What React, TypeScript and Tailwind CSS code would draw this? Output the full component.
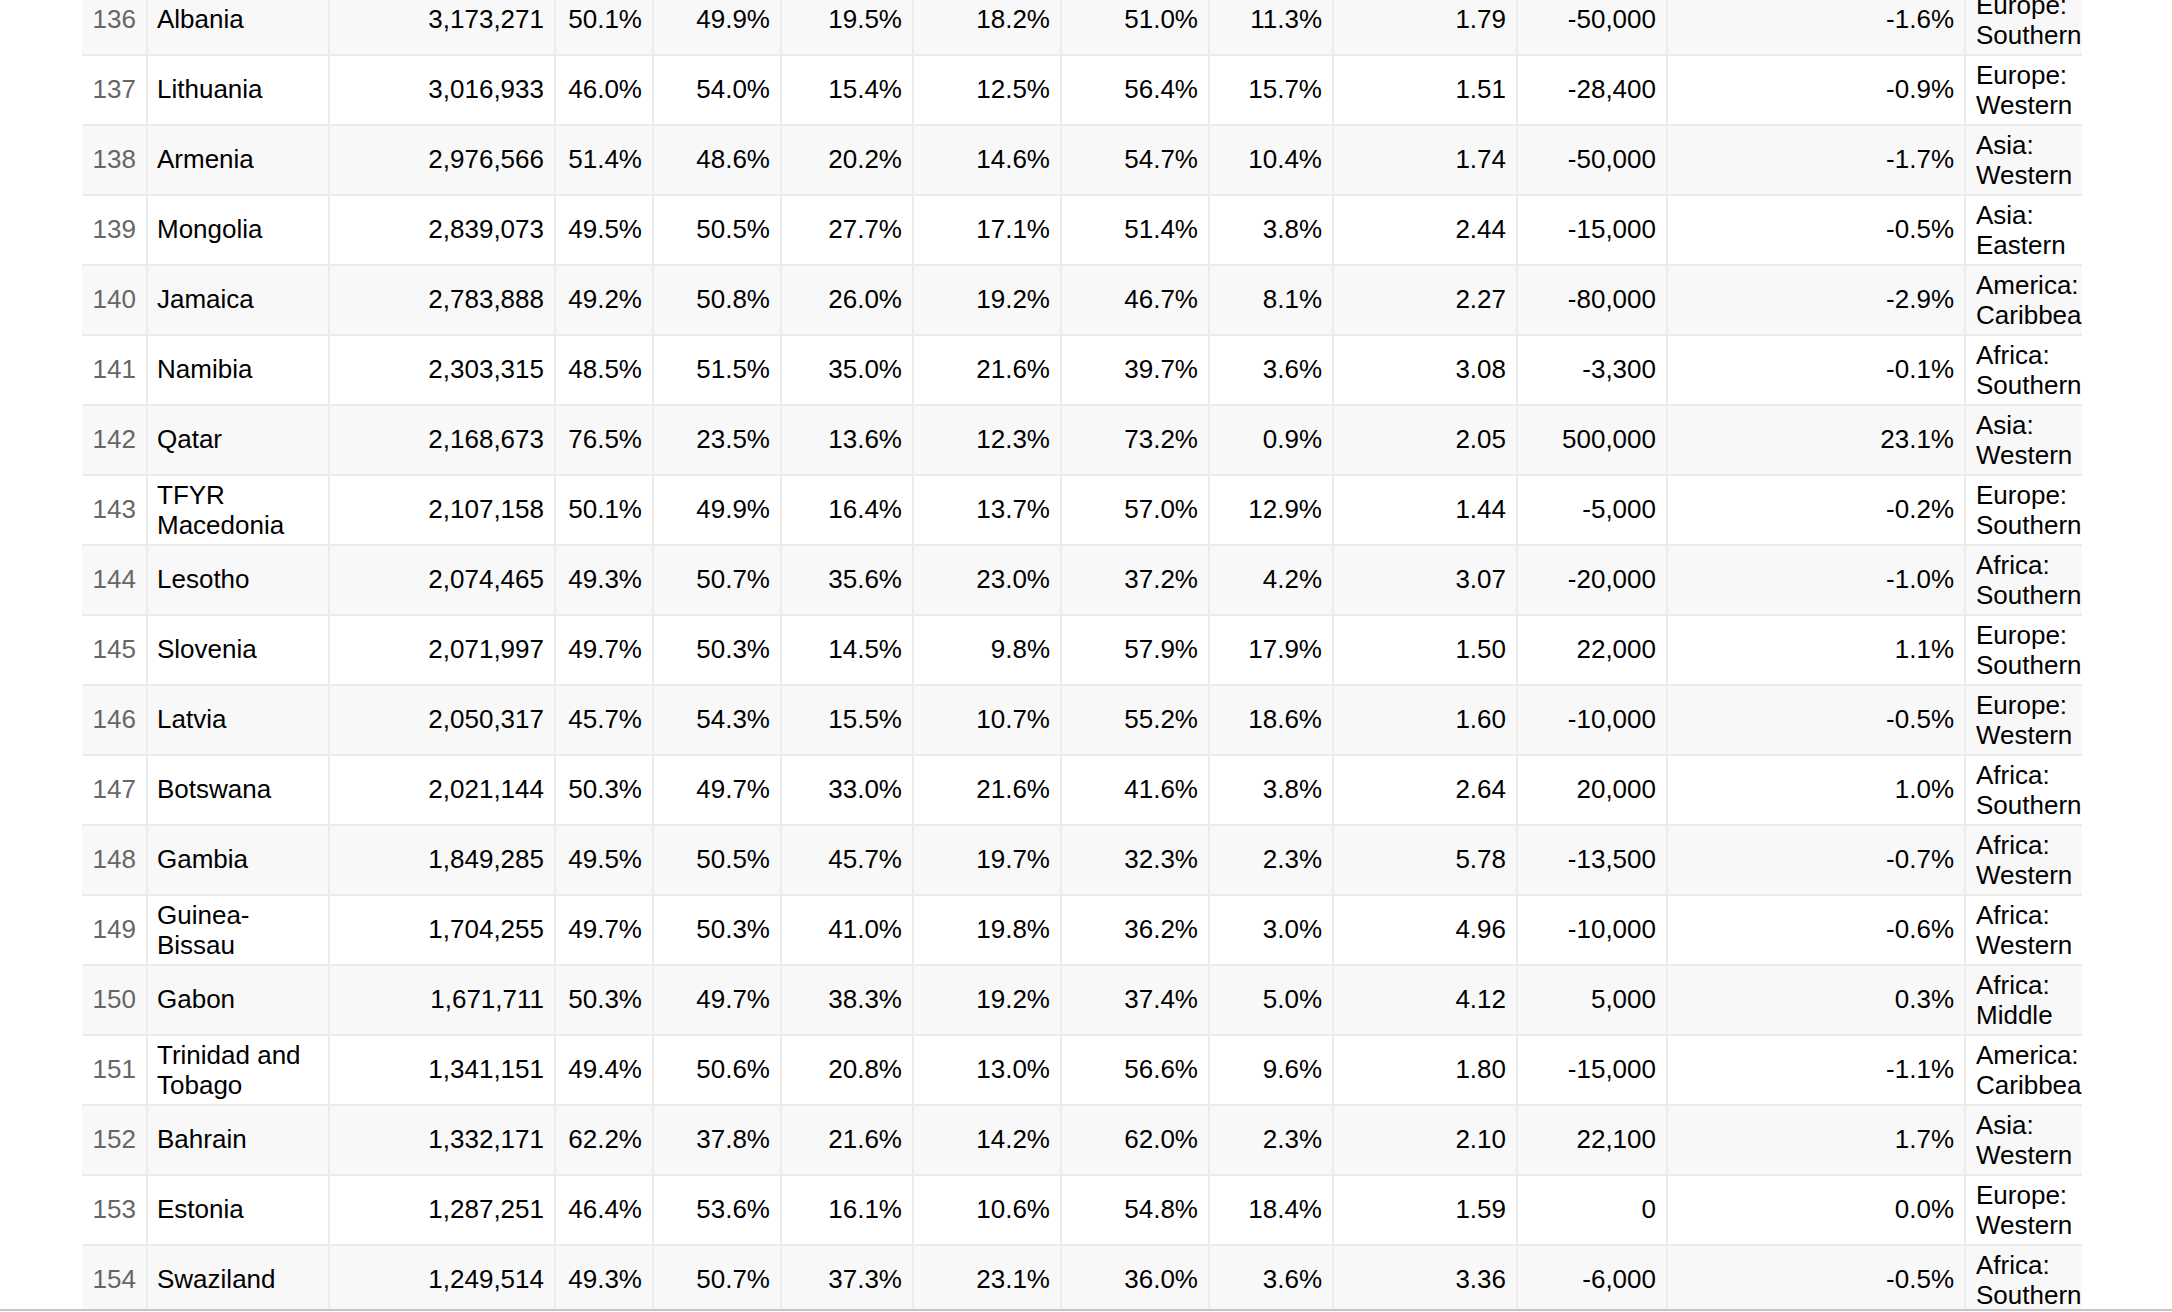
import React from "react";

type Row = [number, string, string, string, string, string, string, string, string, string, string, string, string];

const rows: Row[] = [
  [136, "Albania", "3,173,271", "50.1%", "49.9%", "19.5%", "18.2%", "51.0%", "11.3%", "1.79", "-50,000", "-1.6%", "Europe: Southern"],
  [137, "Lithuania", "3,016,933", "46.0%", "54.0%", "15.4%", "12.5%", "56.4%", "15.7%", "1.51", "-28,400", "-0.9%", "Europe: Western"],
  [138, "Armenia", "2,976,566", "51.4%", "48.6%", "20.2%", "14.6%", "54.7%", "10.4%", "1.74", "-50,000", "-1.7%", "Asia: Western"],
  [139, "Mongolia", "2,839,073", "49.5%", "50.5%", "27.7%", "17.1%", "51.4%", "3.8%", "2.44", "-15,000", "-0.5%", "Asia: Eastern"],
  [140, "Jamaica", "2,783,888", "49.2%", "50.8%", "26.0%", "19.2%", "46.7%", "8.1%", "2.27", "-80,000", "-2.9%", "America: Caribbean"],
  [141, "Namibia", "2,303,315", "48.5%", "51.5%", "35.0%", "21.6%", "39.7%", "3.6%", "3.08", "-3,300", "-0.1%", "Africa: Southern"],
  [142, "Qatar", "2,168,673", "76.5%", "23.5%", "13.6%", "12.3%", "73.2%", "0.9%", "2.05", "500,000", "23.1%", "Asia: Western"],
  [143, "TFYR Macedonia", "2,107,158", "50.1%", "49.9%", "16.4%", "13.7%", "57.0%", "12.9%", "1.44", "-5,000", "-0.2%", "Europe: Southern"],
  [144, "Lesotho", "2,074,465", "49.3%", "50.7%", "35.6%", "23.0%", "37.2%", "4.2%", "3.07", "-20,000", "-1.0%", "Africa: Southern"],
  [145, "Slovenia", "2,071,997", "49.7%", "50.3%", "14.5%", "9.8%", "57.9%", "17.9%", "1.50", "22,000", "1.1%", "Europe: Southern"],
  [146, "Latvia", "2,050,317", "45.7%", "54.3%", "15.5%", "10.7%", "55.2%", "18.6%", "1.60", "-10,000", "-0.5%", "Europe: Western"],
  [147, "Botswana", "2,021,144", "50.3%", "49.7%", "33.0%", "21.6%", "41.6%", "3.8%", "2.64", "20,000", "1.0%", "Africa: Southern"],
  [148, "Gambia", "1,849,285", "49.5%", "50.5%", "45.7%", "19.7%", "32.3%", "2.3%", "5.78", "-13,500", "-0.7%", "Africa: Western"],
  [149, "Guinea-Bissau", "1,704,255", "49.7%", "50.3%", "41.0%", "19.8%", "36.2%", "3.0%", "4.96", "-10,000", "-0.6%", "Africa: Western"],
  [150, "Gabon", "1,671,711", "50.3%", "49.7%", "38.3%", "19.2%", "37.4%", "5.0%", "4.12", "5,000", "0.3%", "Africa: Middle"],
  [151, "Trinidad and Tobago", "1,341,151", "49.4%", "50.6%", "20.8%", "13.0%", "56.6%", "9.6%", "1.80", "-15,000", "-1.1%", "America: Caribbean"],
  [152, "Bahrain", "1,332,171", "62.2%", "37.8%", "21.6%", "14.2%", "62.0%", "2.3%", "2.10", "22,100", "1.7%", "Asia: Western"],
  [153, "Estonia", "1,287,251", "46.4%", "53.6%", "16.1%", "10.6%", "54.8%", "18.4%", "1.59", "0", "0.0%", "Europe: Western"],
  [154, "Swaziland", "1,249,514", "49.3%", "50.7%", "37.3%", "23.1%", "36.0%", "3.6%", "3.36", "-6,000", "-0.5%", "Africa: Southern"],
];

const twoLineNames = new Set(["TFYR Macedonia", "Guinea-Bissau", "Trinidad and Tobago"]);

const numCls = "flex items-center justify-end shrink-0 border-r-2 border-[#ececec] pr-[10px] pb-[3px] whitespace-nowrap";

function TableRow({ r }: { r: Row }) {
  const even = r[0] % 2 === 0;
  const twoLine = twoLineNames.has(r[1]);
  return (
    <div className={`flex h-[70px] border-b-2 border-[#ececec] ${even ? "bg-[#f8f8f8]" : "bg-white"}`}>
      <div className={`${numCls} w-[66px] text-[#666666]`}>{r[0]}</div>
      <div
        className={`flex items-center shrink-0 w-[182px] border-r-2 border-[#ececec] pl-[9px] pr-[10px] ${
          twoLine ? "pb-0" : "pb-[3px]"
        }`}
      >
        <span>{r[1]}</span>
      </div>
      <div className={`${numCls} w-[226px]`}>{r[2]}</div>
      <div className={`${numCls} w-[98px]`}>{r[3]}</div>
      <div className={`${numCls} w-[128px]`}>{r[4]}</div>
      <div className={`${numCls} w-[132px]`}>{r[5]}</div>
      <div className={`${numCls} w-[148px]`}>{r[6]}</div>
      <div className={`${numCls} w-[148px]`}>{r[7]}</div>
      <div className={`${numCls} w-[124px]`}>{r[8]}</div>
      <div className={`${numCls} w-[184px]`}>{r[9]}</div>
      <div className={`${numCls} w-[150px]`}>{r[10]}</div>
      <div className={`${numCls} w-[298px]`}>{r[11]}</div>
      <div className="flex items-center shrink-0 w-[160px] pl-[10px] pr-[10px]">
        <span>{r[12]}</span>
      </div>
    </div>
  );
}

export default function App() {
  return (
    <div className="flex h-[1312px] w-[2172px] flex-col overflow-hidden bg-white font-['Liberation_Sans',Arial,Helvetica,sans-serif] text-[26px] leading-[30px] text-black">
      <div className="h-[1309px] shrink-0 overflow-hidden pl-[82px]">
        <div className="-mt-[14px] w-[2000px] overflow-hidden">
          {rows.map((r) => (
            <TableRow key={r[0]} r={r} />
          ))}
        </div>
      </div>
      <div className="h-[2px] shrink-0 bg-[#c6c6c6]" />
      <div className="h-[1px] shrink-0 bg-white" />
    </div>
  );
}
